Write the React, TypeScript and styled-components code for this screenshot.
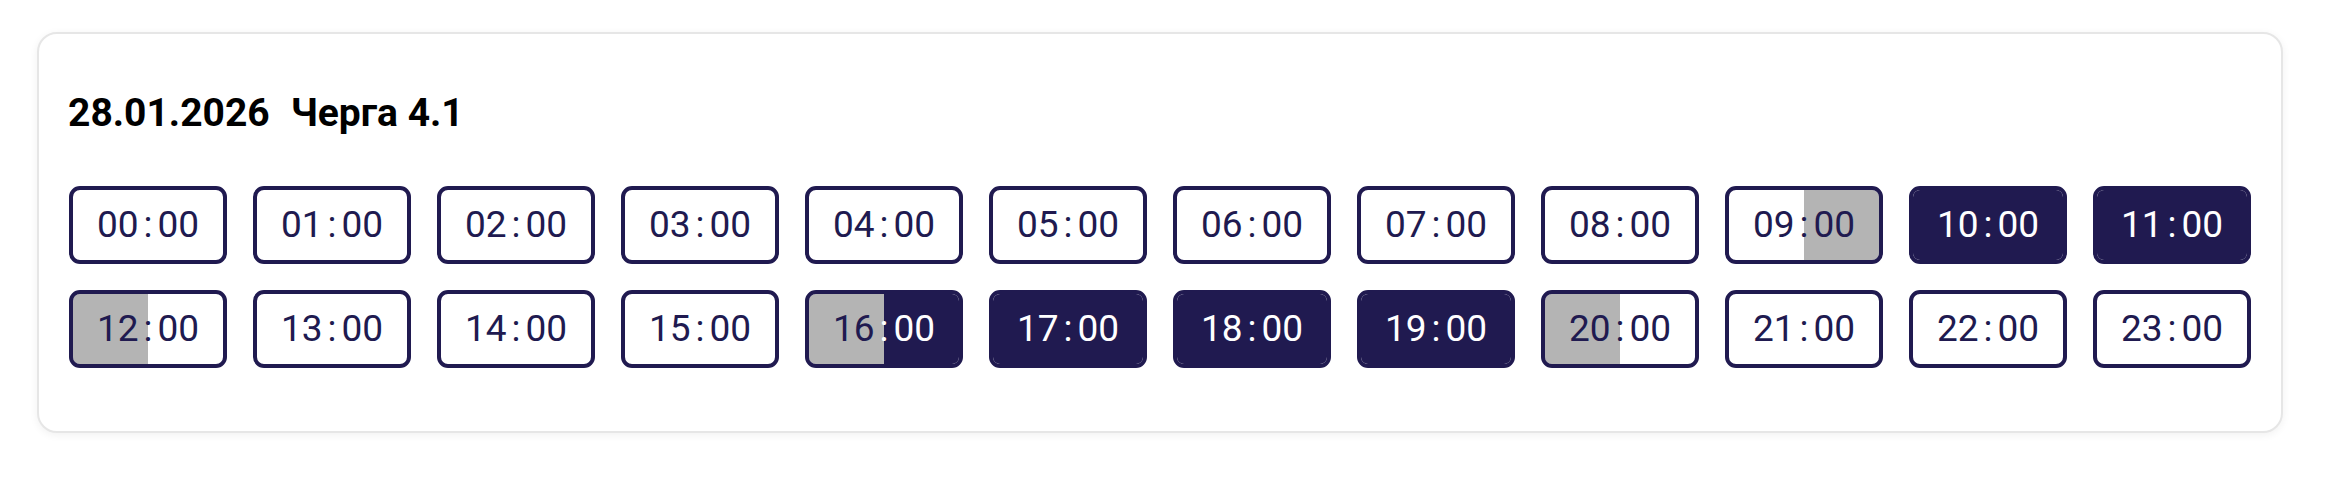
import React from "react";
import styled, { createGlobalStyle } from "styled-components";

type Part = "off" | "on" | "maybe";

const Global = createGlobalStyle`
  html, body { margin: 0; padding: 0; background: #ffffff; }
  body { font-family: Roboto, "Noto Sans", Arial, sans-serif; }
`;

const Page = styled.div`
  padding: 32px 0 40px 37px;
`;

const Card = styled.section`
  box-sizing: border-box;
  width: 2246px;
  background: #ffffff;
  border: 2px solid #e6e6e6;
  border-radius: 20px;
  box-shadow: 0 2px 8px rgba(0, 0, 0, 0.06);
  padding: 56px 30px 63px 30px;
`;

const Title = styled.h2`
  margin: 0 0 50px -1px;
  display: flex;
  gap: 21px;
  font-family: Roboto, Arial, sans-serif;
  font-weight: 700;
  font-size: 39px;
  line-height: 46px;
  color: #000000;
`;

const Grid = styled.div`
  display: grid;
  grid-template-columns: repeat(12, 158px);
  column-gap: 26px;
  row-gap: 26px;
`;

const bg: Record<Part, string> = {
  off: "#ffffff",
  on: "#201a50",
  maybe: "#b4b4b4",
};
const fg: Record<Part, string> = {
  off: "#201a50",
  on: "#ffffff",
  maybe: "#201a50",
};

const Slot = styled.div<{ $left: Part; $right: Part }>`
  box-sizing: border-box;
  height: 78px;
  border: 4px solid #201a50;
  border-radius: 11px;
  background: linear-gradient(
    to right,
    ${(p) => bg[p.$left]} 50%,
    ${(p) => bg[p.$right]} 50%
  );
  background-clip: padding-box;
  display: flex;
  align-items: center;
  justify-content: center;
  font-family: Roboto, Arial, sans-serif;
  font-size: 37px;
  font-weight: 400;
  line-height: 42px;
`;

const Piece = styled.span<{ $part: Part }>`
  color: ${(p) => fg[p.$part]};
`;

const Colon = styled(Piece)`
  margin: 0 5px;
`;

const states: [Part, Part][] = [
  ["off", "off"],
  ["off", "off"],
  ["off", "off"],
  ["off", "off"],
  ["off", "off"],
  ["off", "off"],
  ["off", "off"],
  ["off", "off"],
  ["off", "off"],
  ["off", "maybe"],
  ["on", "on"],
  ["on", "on"],
  ["maybe", "off"],
  ["off", "off"],
  ["off", "off"],
  ["off", "off"],
  ["maybe", "on"],
  ["on", "on"],
  ["on", "on"],
  ["on", "on"],
  ["maybe", "off"],
  ["off", "off"],
  ["off", "off"],
  ["off", "off"],
];

export default function App() {
  return (
    <>
      <Global />
      <Page>
        <Card>
          <Title>
            <span>28.01.2026</span>
            <span>Черга 4.1</span>
          </Title>
          <Grid>
            {states.map(([l, r], i) => {
              const h = String(i).padStart(2, "0");
              return (
                <Slot key={i} $left={l} $right={r}>
                  <Piece $part={l}>{h}</Piece>
                  <Colon $part={r}>:</Colon>
                  <Piece $part={r}>00</Piece>
                </Slot>
              );
            })}
          </Grid>
        </Card>
      </Page>
    </>
  );
}
